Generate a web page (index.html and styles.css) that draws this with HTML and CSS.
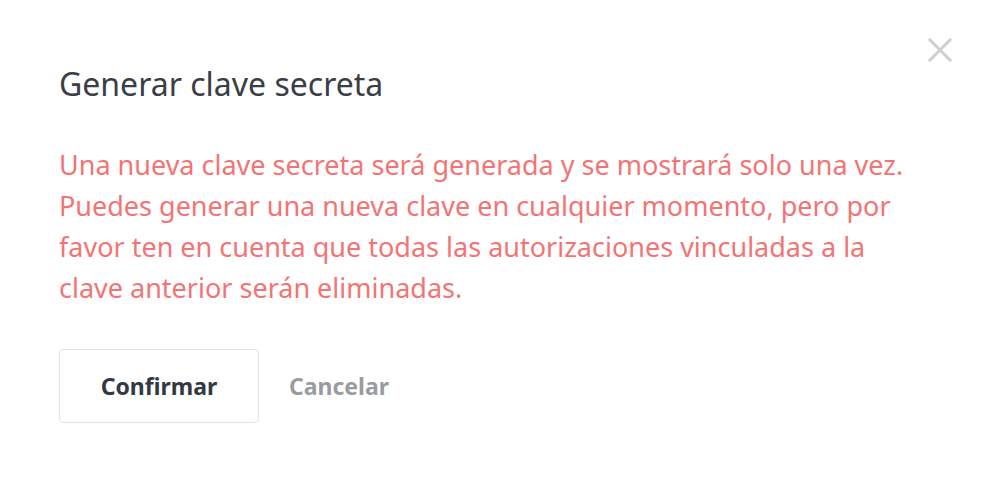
FILE: index.html
```html
<!DOCTYPE html>
<html lang="es">
<head>
    <meta charset="UTF-8">
    <title>Generar clave secreta</title>
    <link rel="stylesheet" href="styles.css">
</head>
<body>
    <div class="modal">
        <button type="button" class="close" aria-label="Cerrar">
            <svg width="24" height="24" viewBox="0 0 24 24">
                <path d="M2 2 L22 22 M22 2 L2 22" stroke="#cfcfcf" stroke-width="3" stroke-linecap="square"/>
            </svg>
        </button>
        <h2 class="title">Generar clave secreta</h2>
        <p class="warning">Una nueva clave secreta será generada y se mostrará solo una vez. Puedes generar una nueva clave en cualquier momento, pero por favor ten en cuenta que todas las autorizaciones vinculadas a la clave anterior serán eliminadas.</p>
        <div class="actions">
            <button type="button" class="btn-confirm">Confirmar</button>
            <button type="button" class="btn-cancel">Cancelar</button>
        </div>
    </div>
</body>
</html>
```

FILE: styles.css
```css
body {
    margin: 0;
    padding: 0;
    background-color: #fff;
    font-family: 'Noto Sans', 'Open Sans', sans-serif;
}

.modal {
    position: relative;
    padding: 63px 59px 0 59px;
    width: 872px;
}

.close {
    position: absolute;
    top: 38px;
    right: 38px;
    background: none;
    border: none;
    padding: 0;
    cursor: pointer;
}

.title {
    margin: 0;
    font-size: 32px;
    font-weight: 400;
    color: #393e47;
    line-height: 42px;
}

.warning {
    margin: 39px 0 0 0;
    font-size: 27px;
    line-height: 41px;
    color: #f37474;
}

.actions {
    display: flex;
    align-items: center;
    gap: 30px;
    margin-top: 41px;
}

.btn-confirm {
    width: 200px;
    height: 74px;
    background-color: #fff;
    border: 1px solid #e3e3e3;
    border-radius: 4px;
    font-family: inherit;
    font-size: 23px;
    font-weight: 700;
    color: #333942;
    cursor: pointer;
}

.btn-cancel {
    background: none;
    border: none;
    padding: 0;
    font-family: inherit;
    font-size: 23px;
    font-weight: 700;
    color: #999c9f;
    cursor: pointer;
}
```
